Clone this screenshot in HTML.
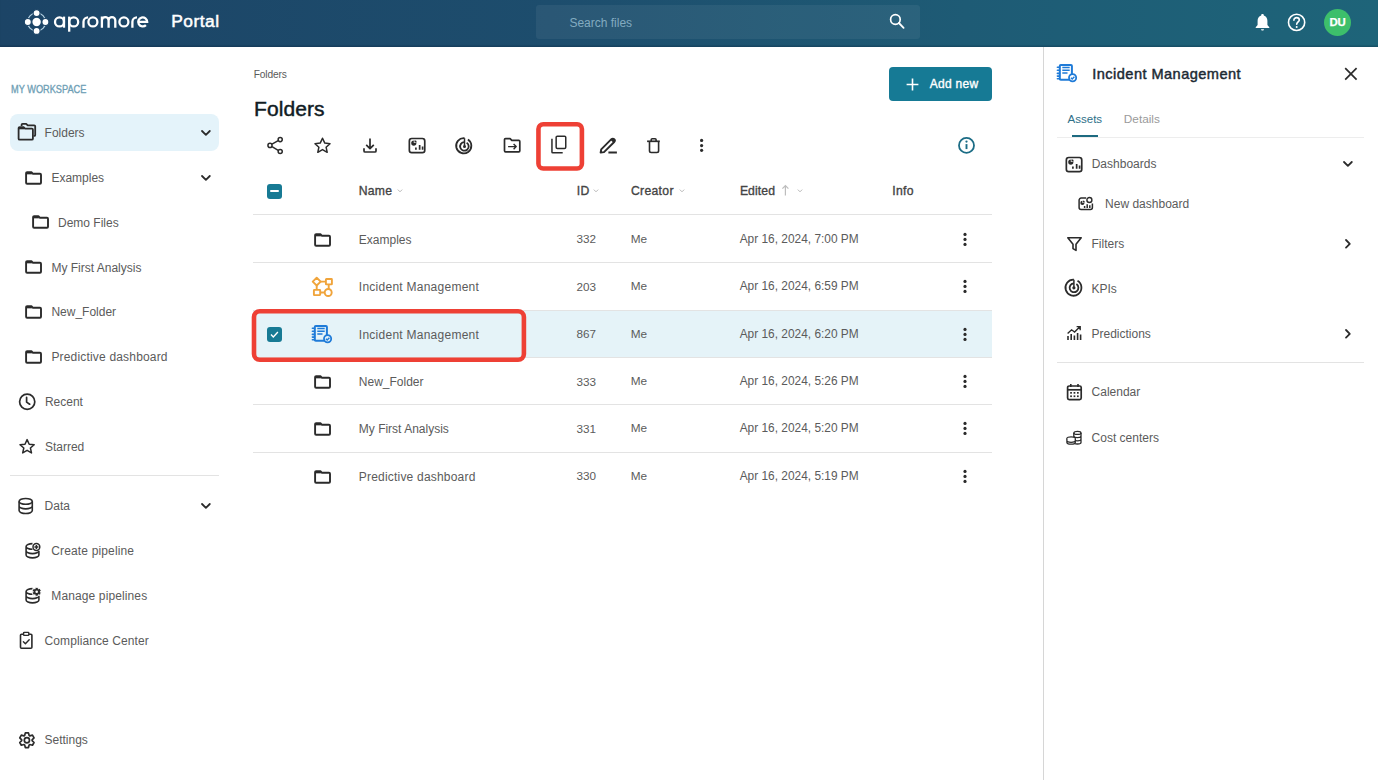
<!DOCTYPE html><html><head><meta charset="utf-8"><title>Apromore Portal</title><style>
*{margin:0;padding:0;box-sizing:border-box}
html,body{width:1378px;height:780px;overflow:hidden;background:#fff}
body{position:relative;font-family:"Liberation Sans",sans-serif}
.t{position:absolute;white-space:nowrap;line-height:1}
.i{position:absolute;overflow:visible}
.hl{position:absolute;height:1px;background:#e3e3e3}
#hdr{position:absolute;left:0;top:0;width:1378px;height:46.6px;background:linear-gradient(90deg,#1c4466 0%,#1d4d6d 40%,#1e5b75 70%,#1e6479 100%);box-shadow:inset 0 -1.4px 0.8px rgba(0,20,40,.22)}
#search{position:absolute;left:536px;top:5px;width:384px;height:33.6px;border-radius:3px;background:rgba(255,255,255,.06)}
#avatar{position:absolute;left:1324px;top:8.5px;width:27px;height:27px;border-radius:50%;background:#3dbf6b;color:#fff;font-weight:700;font-size:11.4px;line-height:27px;text-align:center;letter-spacing:-0.2px;-webkit-text-stroke:0.25px #fff}
#selnav{position:absolute;left:10px;top:113.5px;width:209px;height:37.7px;border-radius:8px;background:#e4f3fa}
#addnew{position:absolute;left:889px;top:67px;width:103px;height:33.5px;border-radius:4px;background:#167a95}
.redbox{position:absolute;border:4.6px solid #ee3f35}
.cbx{position:absolute;width:15px;height:15px;border-radius:3px;background:#177a94}
</style></head><body>
<div id="hdr"></div>
<svg class="i" style="left:0;top:0" width="160" height="46" viewBox="0 0 160 46">
<circle cx="36.6" cy="22" r="9.1" fill="none" stroke="#b4d0e1" stroke-width="1.2"/>
<circle cx="36.6" cy="22" r="4.2" fill="#fff"/>
<g fill="#fff" stroke="#1c4466" stroke-width="1.1"><circle cx="36.6" cy="13.1" r="3.5"/>
<circle cx="36.6" cy="30.9" r="3.5"/>
<circle cx="27.8" cy="22" r="3.5"/>
<circle cx="45.4" cy="22" r="3.5"/></g>
<g fill="none" stroke="#fff" stroke-width="2.3">
<circle cx="59.5" cy="21.95" r="4.5"/><path d="M64 16.6V27.7"/>
<circle cx="73.7" cy="21.95" r="4.5"/><path d="M69.2 16.6V31.7"/>
<path d="M83.5 27.7V21.8A4.6 4.6 0 0 1 88.1 17.4"/>
<circle cx="92.9" cy="21.95" r="4.5"/>
<path d="M101.9 27.7V16.6M101.9 20.4A3.35 3.35 0 0 1 108.6 20.4V27.7M108.6 20.4A3.35 3.35 0 0 1 115.3 20.4V27.7"/>
<circle cx="123.9" cy="21.95" r="4.5"/>
<path d="M132.4 27.7V21.8A4.6 4.6 0 0 1 137 17.4"/>
<path d="M138.3 21.95H147.2A4.5 4.5 0 1 0 145.9 25.1"/>
</g>
</svg>
<div class="t" style="left:171.2px;top:12.50px;font-size:17.4px;color:#ffffff;-webkit-text-stroke:0.5px currentColor;letter-spacing:0.5px;">Portal</div>
<div id="search"></div>
<div class="t" style="left:569.4px;top:17.00px;font-size:12px;color:#82abc0;">Search files</div>
<svg class="i" style="left:887px;top:12px;" width="20" height="20" viewBox="0 0 20 20"><circle cx="8.4" cy="7.5" r="4.8" fill="none" stroke="#fff" stroke-width="1.7"/><line x1="11.9" y1="11" x2="16.6" y2="15.8" stroke="#fff" stroke-width="1.8" stroke-linecap="round"/></svg>
<svg class="i" style="left:1254px;top:12px;" width="17" height="21" viewBox="0 0 17 21"><path d="M8.5 1.9c.8 0 1.3.5 1.3 1.2v.4c2.3.7 3.6 2.7 3.6 5.2v4.3l1.9 2.2v.8H1.7v-.8l1.9-2.2V8.7c0-2.5 1.3-4.5 3.6-5.2v-.4c0-.7.5-1.2 1.3-1.2z" fill="#fff"/><path d="M7 17.2h3c0 .9-.7 1.4-1.5 1.4S7 18.1 7 17.2z" fill="#fff"/></svg>
<svg class="i" style="left:1286px;top:12px;" width="21" height="21" viewBox="0 0 21 21"><circle cx="10.6" cy="10.4" r="8.1" fill="none" stroke="#fff" stroke-width="1.6"/><path d="M7.9 8.2c0-1.6 1.2-2.6 2.7-2.6s2.7 1 2.7 2.4c0 1.9-2.6 2-2.6 4.3" fill="none" stroke="#fff" stroke-width="1.6" stroke-linecap="round"/><circle cx="10.7" cy="14.9" r="1" fill="#fff"/></svg>
<div id="avatar">DU</div>
<div class="t" style="left:11px;top:84.45px;font-size:10.9px;color:#6f9fb6;-webkit-text-stroke:0.35px currentColor;transform:scaleX(0.845);transform-origin:0 0;">MY WORKSPACE</div>
<div id="selnav"></div>
<svg class="i" style="left:17px;top:122px;" width="22" height="20" viewBox="0 0 22 20"><path d="M4.6 3.9V2.8c0-.6.4-1 1-1h3.6l1.5 1.5h6.5c.6 0 1 .4 1 1v8.6c0 .6-.4 1-1 1h-.6" fill="none" stroke="#2b2b2b" stroke-width="1.8" stroke-linejoin="round"/><path d="M1.6 6.1c0-.6.4-1 1-1h4l1.5 1.5h6.8c.6 0 1 .4 1 1v9.1c0 .6-.4 1-1 1H2.6c-.6 0-1-.4-1-1z" fill="none" stroke="#2b2b2b" stroke-width="1.8" stroke-linejoin="round"/><path d="M1.6 6.4h5.6" stroke="#2b2b2b" stroke-width="1.8"/></svg>
<div class="t" style="left:44.6px;top:127.00px;font-size:12px;color:#5b5b5b;">Folders</div>
<svg class="i" style="left:199.9px;top:129.05px;" width="11.8" height="7.9" viewBox="0 0 11.8 7.9"><path d="M2 2 L5.9 5.9 L9.8 2" fill="none" stroke="#2b2b2b" stroke-width="1.8" stroke-linecap="round" stroke-linejoin="round"/></svg>
<svg class="i" style="left:25.3px;top:170.6px;" width="17" height="14" viewBox="0 0 17 14"><path d="M1.1 2.1c0-.6.4-1 1-1h4.3l1.6 1.7h7c.6 0 1 .4 1 1v7.9c0 .6-.4 1-1 1H2.1c-.6 0-1-.4-1-1z" fill="none" stroke="#2b2b2b" stroke-width="1.9" stroke-linejoin="round"/><path d="M1.1 2.4h5.8" stroke="#2b2b2b" stroke-width="1.9"/></svg>
<div class="t" style="left:51.4px;top:171.90px;font-size:12px;color:#5b5b5b;letter-spacing:0px;">Examples</div>
<svg class="i" style="left:199.9px;top:173.65px;" width="11.8" height="7.9" viewBox="0 0 11.8 7.9"><path d="M2 2 L5.9 5.9 L9.8 2" fill="none" stroke="#2b2b2b" stroke-width="1.8" stroke-linecap="round" stroke-linejoin="round"/></svg>
<svg class="i" style="left:32.2px;top:215.39999999999998px;" width="17" height="14" viewBox="0 0 17 14"><path d="M1.1 2.1c0-.6.4-1 1-1h4.3l1.6 1.7h7c.6 0 1 .4 1 1v7.9c0 .6-.4 1-1 1H2.1c-.6 0-1-.4-1-1z" fill="none" stroke="#2b2b2b" stroke-width="1.9" stroke-linejoin="round"/><path d="M1.1 2.4h5.8" stroke="#2b2b2b" stroke-width="1.9"/></svg>
<div class="t" style="left:58px;top:216.70px;font-size:12px;color:#5b5b5b;letter-spacing:0px;">Demo Files</div>
<svg class="i" style="left:25.3px;top:260.2px;" width="17" height="14" viewBox="0 0 17 14"><path d="M1.1 2.1c0-.6.4-1 1-1h4.3l1.6 1.7h7c.6 0 1 .4 1 1v7.9c0 .6-.4 1-1 1H2.1c-.6 0-1-.4-1-1z" fill="none" stroke="#2b2b2b" stroke-width="1.9" stroke-linejoin="round"/><path d="M1.1 2.4h5.8" stroke="#2b2b2b" stroke-width="1.9"/></svg>
<div class="t" style="left:51.4px;top:261.50px;font-size:12px;color:#5b5b5b;letter-spacing:0px;">My First Analysis</div>
<svg class="i" style="left:25.3px;top:305.0px;" width="17" height="14" viewBox="0 0 17 14"><path d="M1.1 2.1c0-.6.4-1 1-1h4.3l1.6 1.7h7c.6 0 1 .4 1 1v7.9c0 .6-.4 1-1 1H2.1c-.6 0-1-.4-1-1z" fill="none" stroke="#2b2b2b" stroke-width="1.9" stroke-linejoin="round"/><path d="M1.1 2.4h5.8" stroke="#2b2b2b" stroke-width="1.9"/></svg>
<div class="t" style="left:51.4px;top:306.30px;font-size:12px;color:#5b5b5b;letter-spacing:0px;">New_Folder</div>
<svg class="i" style="left:25.3px;top:349.8px;" width="17" height="14" viewBox="0 0 17 14"><path d="M1.1 2.1c0-.6.4-1 1-1h4.3l1.6 1.7h7c.6 0 1 .4 1 1v7.9c0 .6-.4 1-1 1H2.1c-.6 0-1-.4-1-1z" fill="none" stroke="#2b2b2b" stroke-width="1.9" stroke-linejoin="round"/><path d="M1.1 2.4h5.8" stroke="#2b2b2b" stroke-width="1.9"/></svg>
<div class="t" style="left:51.4px;top:351.10px;font-size:12px;color:#5b5b5b;letter-spacing:0.18px;">Predictive dashboard</div>
<svg class="i" style="left:17px;top:392px;" width="20" height="20" viewBox="0 0 20 20"><circle cx="10.2" cy="9.7" r="7.6" fill="none" stroke="#2b2b2b" stroke-width="1.7"/><path d="M9.6 5.4v4.7l3.1 2.1" fill="none" stroke="#2b2b2b" stroke-width="1.7" stroke-linecap="round" stroke-linejoin="round"/></svg>
<div class="t" style="left:44.9px;top:396.00px;font-size:12px;color:#5b5b5b;">Recent</div>
<svg class="i" style="left:17px;top:437px;" width="20" height="19" viewBox="0 0 20 19"><path d="M10.1 2.6l2.1 4.6 5 .5-3.8 3.3 1.1 4.9-4.4-2.6-4.4 2.6 1.1-4.9L3 7.7l5-.5z" fill="none" stroke="#2b2b2b" stroke-width="1.5" stroke-linejoin="round"/></svg>
<div class="t" style="left:44.9px;top:440.60px;font-size:12px;color:#5b5b5b;">Starred</div>
<div class="hl" style="left:10px;top:475px;width:209px"></div>
<svg class="i" style="left:17px;top:497px;" width="18" height="18" viewBox="0 0 18 18"><ellipse cx="8.7" cy="4.4" rx="6.6" ry="2.9" fill="none" stroke="#2b2b2b" stroke-width="1.6"/><path d="M2.1 4.4v9.2c0 1.6 3 2.9 6.6 2.9s6.6-1.3 6.6-2.9V4.4M2.1 9c0 1.6 3 2.9 6.6 2.9s6.6-1.3 6.6-2.9" fill="none" stroke="#2b2b2b" stroke-width="1.6"/></svg>
<div class="t" style="left:44.6px;top:499.90px;font-size:12px;color:#5b5b5b;">Data</div>
<svg class="i" style="left:199.9px;top:501.55px;" width="11.8" height="7.9" viewBox="0 0 11.8 7.9"><path d="M2 2 L5.9 5.9 L9.8 2" fill="none" stroke="#2b2b2b" stroke-width="1.8" stroke-linecap="round" stroke-linejoin="round"/></svg>
<svg class="i" style="left:24px;top:541px;" width="18" height="18" viewBox="0 0 18 18"><path d="M8.5 2.6C5 2.6 2.1 3.8 2.1 5.4v8.6c0 1.6 2.9 2.9 6.4 2.9s6.4-1.3 6.4-2.9V10M2.1 5.4c0 1.6 2.9 2.9 6.4 2.9M2.1 9.7c0 1.6 2.9 2.9 6.4 2.9s6.4-1.3 6.4-2.9" fill="none" stroke="#2b2b2b" stroke-width="1.6"/><circle cx="12.4" cy="6" r="3.4" fill="#fff" stroke="#2b2b2b" stroke-width="1.5"/><path d="M12.4 4v4M10.4 6h4" stroke="#2b2b2b" stroke-width="1.5"/></svg>
<div class="t" style="left:51.3px;top:544.70px;font-size:12px;color:#5b5b5b;letter-spacing:0.14px;">Create pipeline</div>
<svg class="i" style="left:24px;top:586px;" width="18" height="18" viewBox="0 0 18 18"><path d="M8.5 2.6C5 2.6 2.1 3.8 2.1 5.4v8.6c0 1.6 2.9 2.9 6.4 2.9s6.4-1.3 6.4-2.9V10M2.1 5.4c0 1.6 2.9 2.9 6.4 2.9M2.1 9.7c0 1.6 2.9 2.9 6.4 2.9s6.4-1.3 6.4-2.9" fill="none" stroke="#2b2b2b" stroke-width="1.6"/><path d="M11.34 1.41 L14.06 1.41 L14.42 2.99 L14.27 2.90 L15.83 2.43 L17.19 4.78 L16.00 5.89 L16.00 5.71 L17.19 6.82 L15.83 9.17 L14.27 8.70 L14.42 8.61 L14.06 10.19 L11.34 10.19 L10.98 8.61 L11.13 8.70 L9.57 9.17 L8.21 6.82 L9.40 5.71 L9.40 5.89 L8.21 4.78 L9.57 2.43 L11.13 2.90 L10.98 2.99Z" fill="#2b2b2b" stroke="#fff" stroke-width="0.8" stroke-linejoin="round"/><circle cx="12.7" cy="5.8" r="1.3" fill="#fff"/></svg>
<div class="t" style="left:51.3px;top:589.50px;font-size:12px;color:#5b5b5b;letter-spacing:0.12px;">Manage pipelines</div>
<svg class="i" style="left:18px;top:631px;" width="17" height="19" viewBox="0 0 17 19"><rect x="2.5" y="3.2" width="11.4" height="14" rx="1" fill="none" stroke="#2b2b2b" stroke-width="1.6"/><rect x="5.6" y="1.4" width="5.2" height="3" rx=".6" fill="#fff" stroke="#2b2b2b" stroke-width="1.4"/><path d="M5.4 10.8l2 2 3.8-4" fill="none" stroke="#2b2b2b" stroke-width="1.4" stroke-linecap="round" stroke-linejoin="round"/></svg>
<div class="t" style="left:44.5px;top:634.80px;font-size:12px;color:#5b5b5b;letter-spacing:0.1px;">Compliance Center</div>
<svg class="i" style="left:17px;top:730px;" width="20" height="20" viewBox="0 0 20 20"><path d="M8.34 2.86 L11.46 2.86 L12.16 5.52 L12.82 5.90 L15.47 5.18 L17.03 7.89 L15.09 9.82 L15.09 10.58 L17.03 12.51 L15.47 15.22 L12.82 14.50 L12.16 14.88 L11.46 17.54 L8.34 17.54 L7.64 14.88 L6.98 14.50 L4.33 15.22 L2.77 12.51 L4.71 10.58 L4.71 9.82 L2.77 7.89 L4.33 5.18 L6.98 5.90 L7.64 5.52Z" fill="none" stroke="#2b2b2b" stroke-width="1.7" stroke-linejoin="round"/><circle cx="9.9" cy="10.2" r="2.6" fill="none" stroke="#2b2b2b" stroke-width="1.7"/></svg>
<div class="t" style="left:44.5px;top:734.40px;font-size:12px;color:#5b5b5b;">Settings</div>
<div class="t" style="left:253.7px;top:69.90px;font-size:10.2px;color:#5a5a5a;letter-spacing:-0.15px;">Folders</div>
<div class="t" style="left:254px;top:97.70px;font-size:21px;color:#111c24;-webkit-text-stroke:0.45px currentColor;letter-spacing:0.1px;">Folders</div>
<div id="addnew"></div>
<svg class="i" style="left:906px;top:78px;" width="13" height="13" viewBox="0 0 13 13"><path d="M6.5 0.6v11.8M0.6 6.5h11.8" stroke="#fff" stroke-width="1.6"/></svg>
<div class="t" style="left:929.7px;top:77.90px;font-size:12px;color:#fff;-webkit-text-stroke:0.35px currentColor;letter-spacing:0.3px;">Add new</div>
<svg class="i" style="left:262px;top:133px;" width="24" height="24" viewBox="0 0 24 24"><circle cx="8" cy="12.4" r="2.05" fill="none" stroke="#2b2b2b" stroke-width="1.5"/><circle cx="18.2" cy="6.6" r="2.05" fill="none" stroke="#2b2b2b" stroke-width="1.5"/><circle cx="18.2" cy="18.5" r="2.05" fill="none" stroke="#2b2b2b" stroke-width="1.5"/><path d="M10 11.2l6.2-3.5M10 13.6l6.2 3.7" stroke="#2b2b2b" stroke-width="1.5"/></svg>
<svg class="i" style="left:310px;top:133px;" width="24" height="24" viewBox="0 0 24 24"><path d="M12.5 5.2l2.3 4.9 5.2.6-3.9 3.5 1.1 5.1-4.7-2.7-4.7 2.7 1.1-5.1-3.9-3.5 5.2-.6z" fill="none" stroke="#2b2b2b" stroke-width="1.5" stroke-linejoin="round"/></svg>
<svg class="i" style="left:358px;top:133px;" width="24" height="24" viewBox="0 0 24 24"><path d="M12 5.4v10M8.2 11.8l3.8 3.8 3.8-3.8" fill="none" stroke="#2b2b2b" stroke-width="1.7" stroke-linejoin="round"/><path d="M6 15.3v2.6c0 .7.4 1.1 1.1 1.1h9.8c.7 0 1.1-.4 1.1-1.1v-2.6" fill="none" stroke="#2b2b2b" stroke-width="1.7"/></svg>
<svg class="i" style="left:407.8px;top:136.8px;" width="18" height="17" viewBox="0 0 18 17"><rect x="1.35" y="1.5" width="15.4" height="14.15" rx="2.4" fill="none" stroke="#2b2b2b" stroke-width="1.7"/><path d="M5.8 3.5a2.6 2.6 0 1 0 2.6 2.6H5.8z" fill="#2b2b2b"/><path d="M6.5 3.2v2.3h2.3a2.3 2.3 0 0 0 -2.3 -2.3z" fill="#2b2b2b"/><path d="M7.9 12.8v-2.2M11.65 12.8V8.1M14.6 12.8V9.4" stroke="#2b2b2b" stroke-width="1.7"/></svg>
<svg class="i" style="left:452.4px;top:133.8px;" width="24" height="24" viewBox="0 0 24 24"><path d="M15.9 5.4A7.6 7.6 0 1 1 12.5 4.2" fill="none" stroke="#2b2b2b" stroke-width="1.8"/><path d="M14.6 8.7A4.3 4.3 0 1 1 12.5 8.1" fill="none" stroke="#2b2b2b" stroke-width="1.8"/><path d="M12.5 4.2v8.3" stroke="#2b2b2b" stroke-width="1.5"/><circle cx="12.5" cy="12.4" r="1.5" fill="#2b2b2b"/></svg>
<svg class="i" style="left:500px;top:133px;" width="24" height="24" viewBox="0 0 24 24"><path d="M4.5 6.6c0-.6.4-1 1-1h4.6l1.7 1.8h7c.6 0 1 .4 1 1v9.4c0 .6-.4 1-1 1H5.5c-.6 0-1-.4-1-1z" fill="none" stroke="#2b2b2b" stroke-width="1.7" stroke-linejoin="round"/><path d="M8.1 13.6h8M13.6 11l2.6 2.6-2.6 2.6" fill="none" stroke="#2b2b2b" stroke-width="1.4" stroke-linejoin="round"/></svg>
<svg class="i" style="left:547px;top:133px;" width="24" height="24" viewBox="0 0 24 24"><rect x="9.15" y="3.15" width="9.6" height="12.3" rx="1.2" fill="none" stroke="#2b2b2b" stroke-width="1.5"/><path d="M4.95 5.8v13.2c0 .4.3.75.75.75h10" fill="none" stroke="#2b2b2b" stroke-width="1.5"/></svg>
<svg class="i" style="left:595px;top:133px;" width="24" height="24" viewBox="0 0 24 24"><path d="M5.6 19.6l.6-3.2 10.2-10.2c.8-.8 2-.8 2.8 0s.8 2 0 2.8L9 19.1z" fill="none" stroke="#2b2b2b" stroke-width="1.9" stroke-linejoin="round"/><path d="M15.6 7l2.8 2.8 1-1c.8-.8.8-2 0-2.8s-2-.8-2.8 0z" fill="#2b2b2b"/><path d="M13.4 19.5h8.5" stroke="#2b2b2b" stroke-width="2"/></svg>
<svg class="i" style="left:641px;top:133px;" width="24" height="24" viewBox="0 0 24 24"><path d="M8.5 8.4v9.4c0 1 .7 1.7 1.7 1.7h5.7c1 0 1.7-.7 1.7-1.7V8.4" fill="none" stroke="#2b2b2b" stroke-width="1.6"/><path d="M6.1 8.3h12.7" stroke="#2b2b2b" stroke-width="1.7"/><path d="M10.2 8.2V6.7c0-.6.4-1 1-1h2.9c.6 0 1 .4 1 1v1.5" fill="none" stroke="#2b2b2b" stroke-width="1.6"/></svg>
<svg class="i" style="left:689px;top:133px;" width="24" height="24" viewBox="0 0 24 24"><circle cx="12.6" cy="7.4" r="1.6" fill="#2b2b2b"/><circle cx="12.6" cy="12.6" r="1.6" fill="#2b2b2b"/><circle cx="12.6" cy="17.3" r="1.6" fill="#2b2b2b"/></svg>
<svg class="i" style="left:955px;top:134px;" width="24" height="24" viewBox="0 0 24 24"><circle cx="11.5" cy="11.4" r="7.5" fill="none" stroke="#1b6c85" stroke-width="1.8"/><path d="M11.5 10.1v5" stroke="#1b6c85" stroke-width="1.9"/><circle cx="11.5" cy="7.6" r="1.15" fill="#1b6c85"/></svg>
<svg class="i" style="left:530px;top:116px" width="60" height="60" viewBox="530 116 60 60"><rect x="538.45" y="124.2" width="43.45" height="44.3" rx="4.8" fill="none" stroke="#ee4035" stroke-width="4.6"/></svg>
<div class="cbx" style="left:267px;top:184px"><div style="position:absolute;left:3px;top:6.3px;width:9px;height:2.2px;background:#fff;border-radius:1px"></div></div>
<div class="t" style="left:358.8px;top:185.10px;font-size:12.2px;color:#444444;-webkit-text-stroke:0.35px currentColor;letter-spacing:0.2px;">Name</div>
<svg class="i" style="left:396px;top:188.2px;" width="8" height="6" viewBox="0 0 8 6"><path d="M1.8 1.6L4 3.8 6.2 1.6" fill="none" stroke="#b9b9b9" stroke-width="1"/></svg>
<div class="t" style="left:576.8px;top:185.10px;font-size:12.2px;color:#444444;-webkit-text-stroke:0.35px currentColor;letter-spacing:0.3px;">ID</div>
<svg class="i" style="left:592px;top:188.2px;" width="8" height="6" viewBox="0 0 8 6"><path d="M1.8 1.6L4 3.8 6.2 1.6" fill="none" stroke="#b9b9b9" stroke-width="1"/></svg>
<div class="t" style="left:631px;top:185.10px;font-size:12.2px;color:#444444;-webkit-text-stroke:0.35px currentColor;letter-spacing:0.3px;">Creator</div>
<svg class="i" style="left:677.5px;top:188.2px;" width="8" height="6" viewBox="0 0 8 6"><path d="M1.8 1.6L4 3.8 6.2 1.6" fill="none" stroke="#b9b9b9" stroke-width="1"/></svg>
<div class="t" style="left:739.9px;top:185.10px;font-size:12.2px;color:#444444;-webkit-text-stroke:0.35px currentColor;letter-spacing:0.1px;">Edited</div>
<svg class="i" style="left:781px;top:183px;" width="9" height="14" viewBox="0 0 9 14"><path d="M4.4 12.6V2.6M1.4 5.6l3-3 3 3" fill="none" stroke="#bdbdbd" stroke-width="1.2"/></svg>
<svg class="i" style="left:795.7px;top:188.2px;" width="8" height="6" viewBox="0 0 8 6"><path d="M1.8 1.6L4 3.8 6.2 1.6" fill="none" stroke="#b9b9b9" stroke-width="1"/></svg>
<div class="t" style="left:892.3px;top:185.10px;font-size:12.2px;color:#444444;-webkit-text-stroke:0.35px currentColor;letter-spacing:0.3px;">Info</div>
<div style="position:absolute;left:253px;top:310px;width:739px;height:47.5px;background:#e5f3f8"></div>
<div class="hl" style="left:253px;top:214px;width:739px"></div>
<div class="hl" style="left:253px;top:262px;width:739px"></div>
<div class="hl" style="left:253px;top:310px;width:739px"></div>
<div class="hl" style="left:253px;top:357px;width:739px"></div>
<div class="hl" style="left:253px;top:404px;width:739px"></div>
<div class="hl" style="left:253px;top:452px;width:739px"></div>
<svg class="i" style="left:314.2px;top:232.85px;" width="17" height="14" viewBox="0 0 17 14"><path d="M1.1 2.1c0-.6.4-1 1-1h4.3l1.6 1.7h7c.6 0 1 .4 1 1v7.9c0 .6-.4 1-1 1H2.1c-.6 0-1-.4-1-1z" fill="none" stroke="#2b2b2b" stroke-width="1.9" stroke-linejoin="round"/><path d="M1.1 2.4h5.8" stroke="#2b2b2b" stroke-width="1.9"/></svg>
<div class="t" style="left:358.8px;top:233.75px;font-size:12px;color:#5b5b5b;letter-spacing:0px;">Examples</div>
<div class="t" style="left:576.4px;top:233.40px;font-size:11.7px;color:#5b5b5b;">332</div>
<div class="t" style="left:630.7px;top:233.85px;font-size:11.8px;color:#5b5b5b;">Me</div>
<div class="t" style="left:739.7px;top:233.80px;font-size:11.9px;color:#5b5b5b;">Apr 16, 2024, 7:00 PM</div>
<svg class="i" style="left:959px;top:230.75px;" width="12" height="16" viewBox="0 0 12 16"><circle cx="6" cy="3.4" r="1.6" fill="#2b2b2b"/><circle cx="6" cy="8.4" r="1.6" fill="#2b2b2b"/><circle cx="6" cy="13.4" r="1.6" fill="#2b2b2b"/></svg>
<svg class="i" style="left:311px;top:276px;" width="23" height="22" viewBox="0 0 23 22"><path d="M5.7 1.7l4 3.9-4 3.9-4-3.9z" fill="none" stroke="#f0a43b" stroke-width="1.9" stroke-linejoin="round"/><rect x="14.9" y="3" width="6" height="5.4" rx=".5" fill="none" stroke="#f0a43b" stroke-width="1.9"/><rect x="2.9" y="13.9" width="6.3" height="5.2" rx=".5" fill="none" stroke="#f0a43b" stroke-width="1.9"/><circle cx="17.2" cy="16.5" r="3.5" fill="none" stroke="#f0a43b" stroke-width="1.9"/><path d="M9.7 5.6h5.2M5.7 9.5v4.4M17.7 8.4v4.6M9.2 16.5h4.5" stroke="#f0a43b" stroke-width="1.9"/></svg>
<div class="t" style="left:358.8px;top:281.15px;font-size:12px;color:#5b5b5b;letter-spacing:0.26px;">Incident Management</div>
<div class="t" style="left:576.4px;top:280.80px;font-size:11.7px;color:#5b5b5b;">203</div>
<div class="t" style="left:630.7px;top:281.25px;font-size:11.8px;color:#5b5b5b;">Me</div>
<div class="t" style="left:739.7px;top:281.20px;font-size:11.9px;color:#5b5b5b;">Apr 16, 2024, 6:59 PM</div>
<svg class="i" style="left:959px;top:278.15px;" width="12" height="16" viewBox="0 0 12 16"><circle cx="6" cy="3.4" r="1.6" fill="#2b2b2b"/><circle cx="6" cy="8.4" r="1.6" fill="#2b2b2b"/><circle cx="6" cy="13.4" r="1.6" fill="#2b2b2b"/></svg>
<svg class="i" style="left:311px;top:322.5px;" width="22" height="21" viewBox="0 0 22 21"><rect x="3.8" y="3.1" width="12.1" height="14.6" rx="1" fill="none" stroke="#1f7bd8" stroke-width="2"/><path d="M1.4 5.3h2.2M1.4 8.3h2.2M1.4 11.4h2.2M1.4 14.1h2.2M1.4 16.7h2.2" stroke="#1f7bd8" stroke-width="1.6" stroke-linecap="round"/><path d="M6.3 5.6h7.4M6.3 8.2h7.4M6.3 10.9h5.2" stroke="#1f7bd8" stroke-width="1.5"/><circle cx="16.6" cy="15.8" r="3.6" fill="#e5f3f8" stroke="#1f7bd8" stroke-width="1.8"/><path d="M14.9 15.8l1.3 1.3 2.2-2.3" fill="none" stroke="#1f7bd8" stroke-width="1.4"/></svg>
<div class="cbx" style="left:267px;top:326.75px"><svg style="position:absolute;left:0;top:0" width="15" height="15" viewBox="0 0 15 15"><path d="M4 7.6l2.3 2.3 4.6-4.8" fill="none" stroke="#fff" stroke-width="1.4"/></svg></div>
<div class="t" style="left:358.8px;top:328.55px;font-size:12px;color:#5b5b5b;letter-spacing:0.26px;">Incident Management</div>
<div class="t" style="left:576.4px;top:328.20px;font-size:11.7px;color:#5b5b5b;">867</div>
<div class="t" style="left:630.7px;top:328.65px;font-size:11.8px;color:#5b5b5b;">Me</div>
<div class="t" style="left:739.7px;top:328.60px;font-size:11.9px;color:#5b5b5b;">Apr 16, 2024, 6:20 PM</div>
<svg class="i" style="left:959px;top:325.55px;" width="12" height="16" viewBox="0 0 12 16"><circle cx="6" cy="3.4" r="1.6" fill="#2b2b2b"/><circle cx="6" cy="8.4" r="1.6" fill="#2b2b2b"/><circle cx="6" cy="13.4" r="1.6" fill="#2b2b2b"/></svg>
<svg class="i" style="left:314.2px;top:375.05px;" width="17" height="14" viewBox="0 0 17 14"><path d="M1.1 2.1c0-.6.4-1 1-1h4.3l1.6 1.7h7c.6 0 1 .4 1 1v7.9c0 .6-.4 1-1 1H2.1c-.6 0-1-.4-1-1z" fill="none" stroke="#2b2b2b" stroke-width="1.9" stroke-linejoin="round"/><path d="M1.1 2.4h5.8" stroke="#2b2b2b" stroke-width="1.9"/></svg>
<div class="t" style="left:358.8px;top:375.95px;font-size:12px;color:#5b5b5b;letter-spacing:0px;">New_Folder</div>
<div class="t" style="left:576.4px;top:375.60px;font-size:11.7px;color:#5b5b5b;">333</div>
<div class="t" style="left:630.7px;top:376.05px;font-size:11.8px;color:#5b5b5b;">Me</div>
<div class="t" style="left:739.7px;top:376.00px;font-size:11.9px;color:#5b5b5b;">Apr 16, 2024, 5:26 PM</div>
<svg class="i" style="left:959px;top:372.95px;" width="12" height="16" viewBox="0 0 12 16"><circle cx="6" cy="3.4" r="1.6" fill="#2b2b2b"/><circle cx="6" cy="8.4" r="1.6" fill="#2b2b2b"/><circle cx="6" cy="13.4" r="1.6" fill="#2b2b2b"/></svg>
<svg class="i" style="left:314.2px;top:422.45000000000005px;" width="17" height="14" viewBox="0 0 17 14"><path d="M1.1 2.1c0-.6.4-1 1-1h4.3l1.6 1.7h7c.6 0 1 .4 1 1v7.9c0 .6-.4 1-1 1H2.1c-.6 0-1-.4-1-1z" fill="none" stroke="#2b2b2b" stroke-width="1.9" stroke-linejoin="round"/><path d="M1.1 2.4h5.8" stroke="#2b2b2b" stroke-width="1.9"/></svg>
<div class="t" style="left:358.8px;top:423.35px;font-size:12px;color:#5b5b5b;letter-spacing:0px;">My First Analysis</div>
<div class="t" style="left:576.4px;top:423.00px;font-size:11.7px;color:#5b5b5b;">331</div>
<div class="t" style="left:630.7px;top:423.45px;font-size:11.8px;color:#5b5b5b;">Me</div>
<div class="t" style="left:739.7px;top:423.40px;font-size:11.9px;color:#5b5b5b;">Apr 16, 2024, 5:20 PM</div>
<svg class="i" style="left:959px;top:420.35px;" width="12" height="16" viewBox="0 0 12 16"><circle cx="6" cy="3.4" r="1.6" fill="#2b2b2b"/><circle cx="6" cy="8.4" r="1.6" fill="#2b2b2b"/><circle cx="6" cy="13.4" r="1.6" fill="#2b2b2b"/></svg>
<svg class="i" style="left:314.2px;top:469.85px;" width="17" height="14" viewBox="0 0 17 14"><path d="M1.1 2.1c0-.6.4-1 1-1h4.3l1.6 1.7h7c.6 0 1 .4 1 1v7.9c0 .6-.4 1-1 1H2.1c-.6 0-1-.4-1-1z" fill="none" stroke="#2b2b2b" stroke-width="1.9" stroke-linejoin="round"/><path d="M1.1 2.4h5.8" stroke="#2b2b2b" stroke-width="1.9"/></svg>
<div class="t" style="left:358.8px;top:470.75px;font-size:12px;color:#5b5b5b;letter-spacing:0.2px;">Predictive dashboard</div>
<div class="t" style="left:576.4px;top:470.40px;font-size:11.7px;color:#5b5b5b;">330</div>
<div class="t" style="left:630.7px;top:470.85px;font-size:11.8px;color:#5b5b5b;">Me</div>
<div class="t" style="left:739.7px;top:470.80px;font-size:11.9px;color:#5b5b5b;">Apr 16, 2024, 5:19 PM</div>
<svg class="i" style="left:959px;top:467.75px;" width="12" height="16" viewBox="0 0 12 16"><circle cx="6" cy="3.4" r="1.6" fill="#2b2b2b"/><circle cx="6" cy="8.4" r="1.6" fill="#2b2b2b"/><circle cx="6" cy="13.4" r="1.6" fill="#2b2b2b"/></svg>
<svg class="i" style="left:245px;top:300px" width="290" height="70" viewBox="245 300 290 70"><rect x="254" y="311.3" width="269.9" height="48.4" rx="5.8" fill="none" stroke="#ee4035" stroke-width="4.6"/></svg>
<div style="position:absolute;left:1043px;top:46.6px;width:1.3px;height:734px;background:#d6d6d6"></div>
<svg class="i" style="left:1056px;top:62.1px;" width="22" height="21" viewBox="0 0 22 21"><rect x="3.8" y="3.1" width="12.1" height="14.6" rx="1" fill="none" stroke="#1f7bd8" stroke-width="2"/><path d="M1.4 5.3h2.2M1.4 8.3h2.2M1.4 11.4h2.2M1.4 14.1h2.2M1.4 16.7h2.2" stroke="#1f7bd8" stroke-width="1.6" stroke-linecap="round"/><path d="M6.3 5.6h7.4M6.3 8.2h7.4M6.3 10.9h5.2" stroke="#1f7bd8" stroke-width="1.5"/><circle cx="16.6" cy="15.8" r="3.6" fill="#ffffff" stroke="#1f7bd8" stroke-width="1.8"/><path d="M14.9 15.8l1.3 1.3 2.2-2.3" fill="none" stroke="#1f7bd8" stroke-width="1.4"/></svg>
<div class="t" style="left:1092.3px;top:66.50px;font-size:14.6px;color:#1c2a33;-webkit-text-stroke:0.45px currentColor;letter-spacing:0.44px;">Incident Management</div>
<svg class="i" style="left:1343px;top:66px;" width="16" height="16" viewBox="0 0 16 16"><path d="M2.2 2.2l11.4 11.4M13.6 2.2L2.2 13.6" stroke="#2b2b2b" stroke-width="1.7"/></svg>
<div class="t" style="left:1067.6px;top:113.95px;font-size:11.5px;color:#2e7088;">Assets</div>
<div class="t" style="left:1123.8px;top:113.80px;font-size:11.8px;color:#9a9a9a;">Details</div>
<div class="hl" style="left:1057px;top:137px;width:307px;background:#ededed"></div>
<div style="position:absolute;left:1072.4px;top:134.8px;width:25.3px;height:2.2px;background:#1d6a80"></div>
<svg class="i" style="left:1064.6px;top:155.6px;" width="18" height="17" viewBox="0 0 18 17"><rect x="1.35" y="1.5" width="15.4" height="14.15" rx="2.4" fill="none" stroke="#2b2b2b" stroke-width="1.7"/><path d="M5.8 3.5a2.6 2.6 0 1 0 2.6 2.6H5.8z" fill="#2b2b2b"/><path d="M6.5 3.2v2.3h2.3a2.3 2.3 0 0 0 -2.3 -2.3z" fill="#2b2b2b"/><path d="M7.9 12.8v-2.2M11.65 12.8V8.1M14.6 12.8V9.4" stroke="#2b2b2b" stroke-width="1.7"/></svg>
<div class="t" style="left:1091.7px;top:158.30px;font-size:12px;color:#5b5b5b;">Dashboards</div>
<svg class="i" style="left:1341.6px;top:160.35000000000002px;" width="11.8" height="7.9" viewBox="0 0 11.8 7.9"><path d="M2 2 L5.9 5.9 L9.8 2" fill="none" stroke="#2b2b2b" stroke-width="1.8" stroke-linecap="round" stroke-linejoin="round"/></svg>
<svg class="i" style="left:1077px;top:196px;" width="18" height="16" viewBox="0 0 18 16"><path d="M9.2 2.1H4.1a2 2 0 0 0-2 2v7.5a2 2 0 0 0 2 2h9.3a2 2 0 0 0 2-2V7.6" fill="none" stroke="#2b2b2b" stroke-width="1.5"/><circle cx="12.4" cy="4" r="2.5" fill="none" stroke="#2b2b2b" stroke-width="1.4"/><path d="M5.4 4.8a2.1 2.1 0 1 0 2.1 2.1H5.4z" fill="#2b2b2b"/><path d="M6 4.5v1.9h1.9a1.9 1.9 0 0 0-1.9-1.9z" fill="#2b2b2b"/><path d="M7.6 11.9V10M10.2 11.9V8.3M12.8 11.9V9.2" stroke="#2b2b2b" stroke-width="1.5"/></svg>
<div class="t" style="left:1105.1px;top:197.90px;font-size:12px;color:#5b5b5b;">New dashboard</div>
<svg class="i" style="left:1065.5px;top:235.5px;" width="17" height="16" viewBox="0 0 17 16"><path d="M1.8 1.8h13.4l-5.2 6.4v6.2L7 12.6V8.2z" fill="none" stroke="#2b2b2b" stroke-width="1.6" stroke-linejoin="round"/></svg>
<div class="t" style="left:1091.5px;top:238.20px;font-size:12px;color:#5b5b5b;">Filters</div>
<svg class="i" style="left:1343.6999999999998px;top:237.89999999999998px;" width="7.8" height="11.6" viewBox="0 0 7.8 11.6"><path d="M2 2 L5.8 5.8 L2 9.6" fill="none" stroke="#2b2b2b" stroke-width="1.8" stroke-linecap="round" stroke-linejoin="round"/></svg>
<svg class="i" style="left:1064px;top:278px;" width="20" height="20" viewBox="0 0 20 20"><path d="M13.5 2.8A8 8 0 1 1 9.9 1.7" fill="none" stroke="#2b2b2b" stroke-width="1.8"/><path d="M12.4 6.1A4.4 4.4 0 1 1 9.9 5.4" fill="none" stroke="#2b2b2b" stroke-width="1.8"/><path d="M9.9 1.7v8.3" stroke="#2b2b2b" stroke-width="1.5"/><circle cx="9.9" cy="9.8" r="1.6" fill="#2b2b2b"/></svg>
<div class="t" style="left:1091.5px;top:283.00px;font-size:12px;color:#5b5b5b;">KPIs</div>
<svg class="i" style="left:1066px;top:325px;" width="16" height="16" viewBox="0 0 16 16"><path d="M2 15V11M5.2 15V9M8.4 15V10.4M11.6 15V8M14.6 15V9.6" stroke="#2b2b2b" stroke-width="1.6"/><path d="M1.6 8.4l4-3.6 3 2.2 5.2-5.2M10.6 1.6h3.6v3.6" fill="none" stroke="#2b2b2b" stroke-width="1.4"/></svg>
<div class="t" style="left:1091.5px;top:327.70px;font-size:12px;color:#5b5b5b;">Predictions</div>
<svg class="i" style="left:1343.6999999999998px;top:327.59999999999997px;" width="7.8" height="11.6" viewBox="0 0 7.8 11.6"><path d="M2 2 L5.8 5.8 L2 9.6" fill="none" stroke="#2b2b2b" stroke-width="1.8" stroke-linecap="round" stroke-linejoin="round"/></svg>
<div class="hl" style="left:1057px;top:362px;width:307px"></div>
<svg class="i" style="left:1065.5px;top:382.8px;" width="17" height="18" viewBox="0 0 17 18"><rect x="1.6" y="3" width="13.6" height="13.6" rx="1.6" fill="none" stroke="#2b2b2b" stroke-width="1.7"/><path d="M1.6 6.8h13.6" stroke="#2b2b2b" stroke-width="1.7"/><path d="M4.8 1v3M12 1v3" stroke="#2b2b2b" stroke-width="1.6"/><g fill="#2b2b2b"><rect x="4.2" y="9" width="1.7" height="1.7"/><rect x="7.6" y="9" width="1.7" height="1.7"/><rect x="11" y="9" width="1.7" height="1.7"/><rect x="4.2" y="12.4" width="1.7" height="1.7"/><rect x="7.6" y="12.4" width="1.7" height="1.7"/><rect x="11" y="12.4" width="1.7" height="1.7"/></g></svg>
<div class="t" style="left:1091.6px;top:386.40px;font-size:12px;color:#5b5b5b;">Calendar</div>
<svg class="i" style="left:1066px;top:429.5px;" width="17" height="15" viewBox="0 0 17 15"><ellipse cx="11.4" cy="2.9" rx="3.6" ry="1.5" fill="none" stroke="#2b2b2b" stroke-width="1.3"/><path d="M7.8 2.9v9.6c0 .8 1.6 1.5 3.6 1.5s3.6-.7 3.6-1.5V2.9M7.8 6.1c0 .8 1.6 1.5 3.6 1.5s3.6-.7 3.6-1.5M7.8 9.3c0 .8 1.6 1.5 3.6 1.5s3.6-.7 3.6-1.5" fill="none" stroke="#2b2b2b" stroke-width="1.3"/><ellipse cx="5.1" cy="8.6" rx="4.2" ry="1.7" fill="#fff" stroke="#2b2b2b" stroke-width="1.3"/><path d="M0.9 8.6v3.9c0 .9 1.9 1.7 4.2 1.7s4.2-.8 4.2-1.7V8.6M0.9 10.6c0 .9 1.9 1.7 4.2 1.7s4.2-.8 4.2-1.7" fill="#fff" stroke="#2b2b2b" stroke-width="1.3"/></svg>
<div class="t" style="left:1091.6px;top:431.50px;font-size:12px;color:#5b5b5b;">Cost centers</div>
</body></html>
